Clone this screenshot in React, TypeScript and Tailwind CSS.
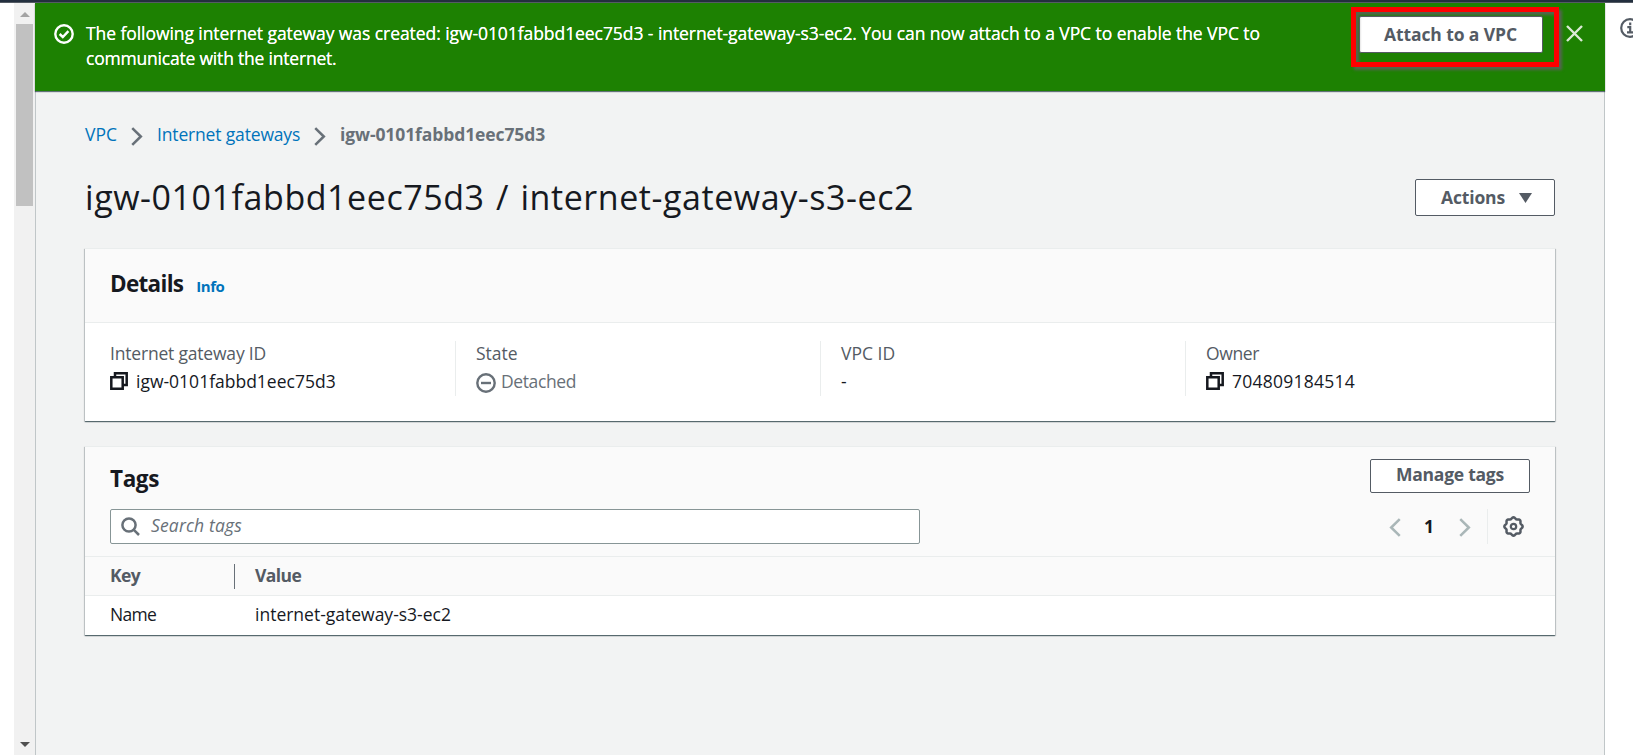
import type { ReactNode } from "react";

function Chevron({ className, flip }: { className: string; flip?: boolean }) {
  return (
    <svg viewBox="0 0 12 20" className={className} fill="none" stroke="currentColor" strokeWidth="2.7">
      <path d={flip ? "M11 1.2 2 10l9 8.8" : "M1 1.2 10 10l-9 8.8"} />
    </svg>
  );
}

function CopyIcon() {
  return (
    <svg viewBox="0 0 18 18" className="h-[18px] w-[18px] shrink-0" fill="none" stroke="#16191f" strokeWidth="2.5">
      <path d="M1.3 5.2h11.4v11.5H1.3z" />
      <path d="M5 5.2V1.3h11.7v11.6h-4" />
    </svg>
  );
}

function MinusCircle() {
  return (
    <svg viewBox="0 0 20 20" className="mt-[4px] h-5 w-5 shrink-0" fill="none" stroke="#687078" strokeWidth="2.4">
      <circle cx="10" cy="10" r="8.7" />
      <path d="M5 10h10" />
    </svg>
  );
}

const gearPath =
  Array.from({ length: 96 }, (_, i) => {
    const a = (i / 96) * Math.PI * 2;
    const r = 8.4 + 0.75 * Math.cos(a * 8);
    return `${i ? "L" : "M"}${(10.5 + r * Math.cos(a)).toFixed(2)} ${(10.5 + r * Math.sin(a)).toFixed(2)}`;
  }).join("") + "Z";

function Gear() {
  return (
    <svg viewBox="0 0 21 21" className="h-[21px] w-[21px]" fill="none" stroke="#545b64" strokeWidth="2.5">
      <path d={gearPath} />
      <circle cx="10.5" cy="10.5" r="2.7" strokeWidth="2.2" />
    </svg>
  );
}

function Card({ children, className }: { children: ReactNode; className: string }) {
  return (
    <section
      className={`${className} border-t border-[#eaeded] bg-white shadow-[0_1px_1px_0_rgba(0,28,36,0.5),1px_1px_1px_0_rgba(0,28,36,0.15),-1px_1px_1px_0_rgba(0,28,36,0.15)]`}
    >
      {children}
    </section>
  );
}

function Field({ label, children, first }: { label: ReactNode; children: ReactNode; first?: boolean }) {
  return (
    <div className={`h-[55px] pt-[2px] ${first ? "" : "border-l border-[#eaeded] pl-[20px]"}`}>
      <div className="text-[#545b64]">{label}</div>
      <div className="mt-2 flex h-5 items-center">{children}</div>
    </div>
  );
}

export default function App() {
  return (
    <div className="flex h-[755px] w-full flex-col overflow-hidden bg-white font-['Open_Sans',sans-serif] text-[17.5px] leading-5 whitespace-nowrap text-[#16191f]">
      <div className="h-[3px] shrink-0 border-b border-[#545b64] bg-[#232f3e]" />
      <div className="flex min-h-0 flex-1">
        <div className="ml-[14px] flex w-[21px] shrink-0 flex-col items-center bg-[#f1f1f1]">
          <svg viewBox="0 0 10 5" className="mt-[9px] h-[5px] w-[10px]" fill="#a3a3a3">
            <path d="M5 0l5 5H0z" />
          </svg>
          <div className="mt-[7px] h-[182px] w-[17px] bg-[#c1c1c1]" />
          <svg viewBox="0 0 10 5" className="mt-auto mb-[8px] h-[5px] w-[10px]" fill="#505050">
            <path d="M5 5l5-5H0z" />
          </svg>
        </div>

        <main className="flex w-[1570px] shrink-0 flex-col bg-[#f2f3f3]">
          <div className="relative z-10 flex h-[88px] shrink-0 items-start bg-[#1d8102] text-white shadow-[0_1px_1px_0_rgba(0,28,36,0.6)]">
            <svg viewBox="0 0 20 20" className="mt-[21px] ml-[19px] h-5 w-5" fill="none" stroke="#fff" strokeWidth="2.4">
              <circle cx="10" cy="10" r="8.7" />
              <path d="M5.6 10l3.2 3 5.6-5.8" />
            </svg>
            <p className="mt-[18px] ml-[12px] flex-1 leading-[25px] tracking-[-0.066px] text-shadow-[0_0_0.5px_#fff]">
              The following internet gateway was created: igw-0101fabbd1eec75d3 - internet-gateway-s3-ec2. You can now attach
              to a VPC to enable the VPC to
              <br />
              <span className="tracking-[-0.2px]">communicate with the internet.</span>
            </p>
            <div className="relative mt-[13px] mr-[23px]">
              <button className="h-[37px] w-[184px] rounded-[2px] border border-[#545b64] bg-white pb-[2px] font-bold tracking-[-0.1px] text-[#545b64]">
                Attach to a VPC
              </button>
              <div className="absolute -top-[9px] -left-[8px] h-[60px] w-[208px] border-[5px] border-[#ff0000] drop-shadow-[3px_3px_1.5px_rgba(95,95,95,0.85)]" />
            </div>
            <svg viewBox="0 0 17 17" className="mt-[22px] mr-[22.5px] h-[17px] w-[17px]" stroke="#dbe9d6" strokeWidth="2.4">
              <path d="M1 1l15 15M16 1L1 16" />
            </svg>
          </div>

          <div className="flex-1 border-x border-[#c0c6c8] pr-[49px] pl-[49px]">
            <nav className="mt-[33px] flex h-5 items-center text-[#0073bb]">
              <span className="w-[46px]">VPC</span>
              <Chevron className="mt-[5px] h-[19px] w-[12px] text-[#687078]" />
              <span className="ml-[14px] w-[157px] tracking-[-0.16px]">Internet gateways</span>
              <Chevron className="mt-[5px] h-[19px] w-[12px] text-[#687078]" />
              <span className="ml-[14px] font-bold tracking-[-0.1px] text-[#687078]">igw-0101fabbd1eec75d3</span>
            </nav>

            <div className="mt-[31px] flex h-[44px] items-center justify-between">
              <h1 className="text-[34px] leading-[44px] tracking-[0.56px] [word-spacing:2px]">igw-0101fabbd1eec75d3 / internet-gateway-s3-ec2</h1>
              <button className="flex h-[37px] w-[140px] items-center rounded-[2px] border border-[#545b64] bg-white pl-[25px] font-bold tracking-[-0.15px] text-[#545b64]">
                <span className="w-[78px] pb-[1px] text-left">Actions</span>
                <svg viewBox="0 0 13 10" className="mt-[1px] h-[10px] w-[13px]" fill="#545b64">
                  <path d="M0 0h13L6.5 10z" />
                </svg>
              </button>
            </div>

            <Card className="mt-[29px] h-[173px]">
              <div className="flex h-[74px] items-baseline border-b border-[#eaeded] bg-[#fafafa] pt-[20px] pl-[25px]">
                <h2 className="text-[22.5px] leading-[30px] font-bold tracking-[-0.7px]">Details</h2>
                <span className="ml-[13px] text-[15px] font-bold tracking-[-0.45px] text-[#0073bb]">Info</span>
              </div>
              <div className="grid grid-cols-[345px_365px_365px_1fr] pt-[18px] pl-[25px]">
                <Field first label={<span className="tracking-[-0.19px]">Internet gateway ID</span>}>
                  <CopyIcon />
                  <span className="ml-[8px]">igw-0101fabbd1eec75d3</span>
                </Field>
                <Field label="State">
                  <MinusCircle />
                  <span className="ml-[5px] tracking-[-0.38px] text-[#687078]">Detached</span>
                </Field>
                <Field label="VPC ID">-</Field>
                <Field label={<span className="tracking-[-0.38px]">Owner</span>}>
                  <CopyIcon />
                  <span className="ml-[8px] tracking-[0.25px]">704809184514</span>
                </Field>
              </div>
            </Card>

            <Card className="mt-[25px] h-[189px]">
              <div className="border-b border-[#eaeded] bg-[#fafafa] px-[25px] pt-[12px] pb-[12px]">
                <div className="flex h-[34px] items-center justify-between">
                  <h2 className="pt-[6px] text-[22.5px] leading-[30px] font-bold tracking-[-0.4px]">Tags</h2>
                  <button className="h-[34px] w-[160px] rounded-[2px] border border-[#545b64] bg-white pb-[4px] font-bold tracking-[-0.25px] text-[#545b64]">
                    Manage tags
                  </button>
                </div>
                <div className="mt-[16px] flex h-[35px] items-center">
                  <div className="flex h-[35px] w-[810px] items-center rounded-[2px] border border-[#879596] bg-white pl-[10px]">
                    <svg viewBox="0 0 19 19" className="h-[19px] w-[19px]" fill="none" stroke="#687078" strokeWidth="2.5">
                      <circle cx="8" cy="8" r="6.6" />
                      <path d="M12.6 12.6l5.4 5.4" />
                    </svg>
                    <span className="ml-[11px] pb-[3px] tracking-[0.16px] text-[#687078] italic">Search tags</span>
                  </div>
                  <div className="ml-auto flex h-full items-center text-[#aab7b8]">
                    <Chevron flip className="mt-px h-[19px] w-[12px]" />
                    <span className="w-[58px] pr-[2px] pb-[2px] text-center font-bold text-[#16191f]">1</span>
                    <Chevron className="mt-px h-[19px] w-[12px]" />
                    <div className="mr-[15px] ml-[16px] h-full w-px bg-[#eaeded]" />
                    <div className="mr-[6px]">
                      <Gear />
                    </div>
                  </div>
                </div>
              </div>
              <div className="flex h-[39px] items-center border-b border-[#eaeded] bg-[#fafafa] pl-[25px] font-bold text-[#545b64]">
                <span className="w-[124px] pb-[2px] tracking-[-0.6px]">Key</span>
                <div className="h-[25px] w-px bg-[#687078]" />
                <span className="ml-[20px] pb-[2px] tracking-[-0.6px]">Value</span>
              </div>
              <div className="flex h-[36px] items-center pl-[25px]">
                <span className="w-[145px] tracking-[-0.7px]">Name</span>
                <span>internet-gateway-s3-ec2</span>
              </div>
            </Card>
          </div>
        </main>

        <aside className="relative min-w-0 flex-1 overflow-hidden">
          <svg viewBox="0 0 20 20" className="mt-[15px] ml-[15px] h-5 w-5" fill="none" stroke="#545b64" strokeWidth="2.2">
            <circle cx="10" cy="10" r="8.8" />
            <path d="M10.2 4.6v2.6M7.3 9.1h2.9v5M7 14.4h6.4" />
          </svg>
        </aside>
      </div>
    </div>
  );
}
